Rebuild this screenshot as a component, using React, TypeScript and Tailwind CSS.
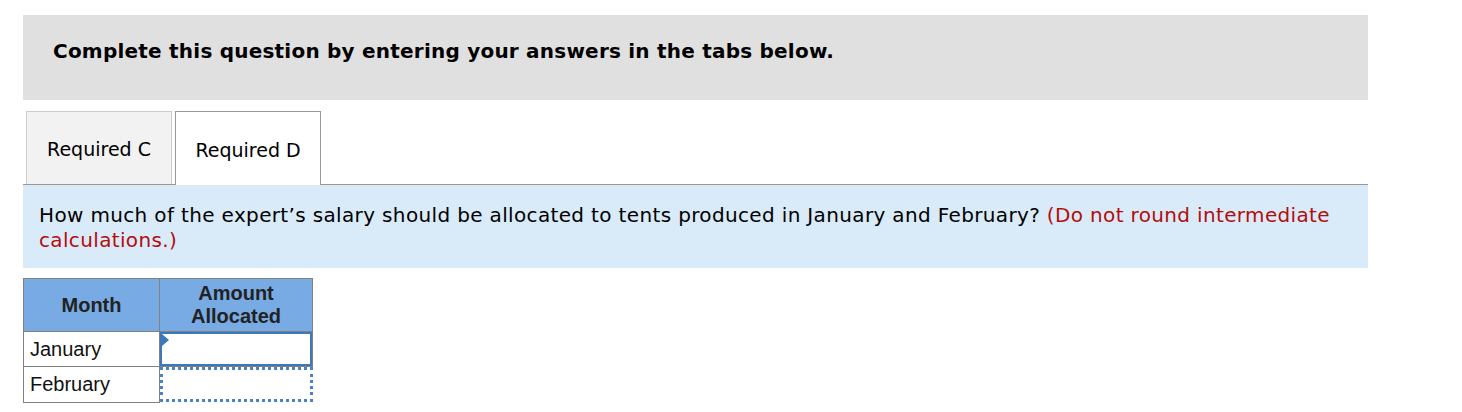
export default function App() {
  return (
    <div className="min-h-screen bg-white pt-[15px] pl-[23px] w-[1462px] h-[412px] overflow-hidden" style={{ fontFamily: '"DejaVu Sans", Verdana, sans-serif' }}>
      <div className="w-[1345px]">
        {/* Instruction header */}
        <div className="bg-[#e0e0e0] h-[85px] flex items-center pl-[30px] pb-[14px]">
          <p className="text-[20px] font-bold text-black tracking-[0.22px]">
            Complete this question by entering your answers in the tabs below.
          </p>
        </div>

        {/* Tabs */}
        <div className="mt-[11px] flex items-end border-b border-[#999] h-[74px] pl-[3px] gap-[3px]">
          <div className="h-[73px] w-[146px] bg-[#f2f2f2] border border-b-0 border-[#ccc] flex items-center justify-center pt-[3px] text-[19px] text-black">
            Required C
          </div>
          <div className="h-[74px] w-[146px] bg-white border border-b-0 border-[#999] -mb-px flex items-center justify-center pt-[3px] text-[19px] text-black">
            Required D
          </div>
        </div>

        {/* Question */}
        <div className="bg-[#d9ebf9] h-[83px] px-[16px] pt-[18px] text-[20px] leading-[25px] tracking-[0.35px] text-black">
          How much of the expert’s salary should be allocated to tents produced in January and February?{' '}
          <span className="text-[#b50c0c]">(Do not round intermediate calculations.)</span>
        </div>

        {/* Table */}
        <table className="mt-[10px] border-collapse text-[20px]" style={{ fontFamily: '"Liberation Sans", Arial, sans-serif' }}>
          <thead>
            <tr className="bg-[#78abe3] h-[53px]">
              <th className="w-[136px] border border-[#808080] font-bold text-[#222] leading-[23px]">Month</th>
              <th className="w-[153px] border border-[#808080] font-bold text-[#222] leading-[23px]">
                Amount
                <br />
                Allocated
              </th>
            </tr>
          </thead>
          <tbody>
            <tr className="h-[35px]">
              <td className="border border-[#808080] pl-[6px] text-[#111]">January</td>
              <td className="border border-[#808080] p-0">
                <div className="relative h-[34px] border-2 border-[#3d78bd] bg-white">
                  <div className="absolute left-0 top-0 w-0 h-0 border-t-[6px] border-b-[6px] border-l-[7px] border-t-transparent border-b-transparent border-l-[#3d78bd]" />
                </div>
              </td>
            </tr>
            <tr className="h-[35px]">
              <td className="border border-[#808080] pl-[6px] text-[#111]">February</td>
              <td className="p-0">
                <div className="h-[35px] border-[3px] border-dotted border-[#4a82c4] bg-white" />
              </td>
            </tr>
          </tbody>
        </table>
      </div>
    </div>
  );
}
